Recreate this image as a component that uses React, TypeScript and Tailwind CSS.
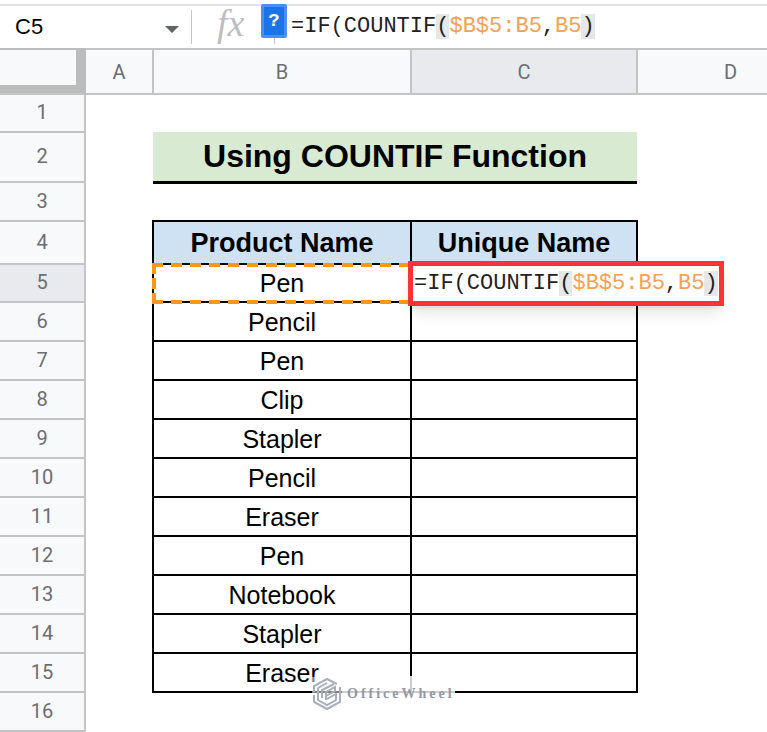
import { useState } from "react";
import type { ReactNode } from "react";

type RowType = {
  id: number;
  product?: string;
  height: string;
};

const rows: RowType[] = [
  { id: 5, product: "Pen", height: "h-[38px]" },
  { id: 6, product: "Pencil", height: "h-[39px]" },
  { id: 7, product: "Pen", height: "h-[39px]" },
  { id: 8, product: "Clip", height: "h-[39px]" },
  { id: 9, product: "Stapler", height: "h-[39px]" },
  { id: 10, product: "Pencil", height: "h-[39px]" },
  { id: 11, product: "Eraser", height: "h-[39px]" },
  { id: 12, product: "Pen", height: "h-[39px]" },
  { id: 13, product: "Notebook", height: "h-[39px]" },
  { id: 14, product: "Stapler", height: "h-[39px]" },
  { id: 15, product: "Eraser", height: "h-[39px]" },
];

const Formula = () => (
  <>
    =IF(COUNTIF<span className="bg-[#e6e8e8]">(</span>
    <span className="text-[#f9a150]">$B$5:B5</span>,
    <span className="text-[#f9a150]">B5</span>
    <span className="bg-[#e6e8e8]">)</span>
  </>
);

const ColumnHeader = ({ children, active }: { children: ReactNode; active?: boolean }) => (
  <th
    scope="col"
    className={`border-2 border-[#c4c4c4] p-0 font-[Roboto,sans-serif] text-[20px] leading-6 font-normal text-[#6b6e72] ${
      active ? "bg-[#e8eaed]" : "bg-[#f8f9fa]"
    }`}
  >
    {children}
  </th>
);

const RowHeader = ({ id, active }: { id: number; active?: boolean }) => (
  <th
    scope="row"
    className={`border-2 border-l-0 border-[#c4c4c4] pb-0.5 font-[Roboto,sans-serif] text-[20px] leading-6 font-normal text-[#6b6e72] ${
      active ? "bg-[#e8eaed]" : "bg-[#f8f9fa]"
    }`}
  >
    {id}
  </th>
);

const FormulaBar = () => {
  const [cell, setCell] = useState("C5");

  return (
    <div className="mt-1 flex h-11 items-center border-t-2 border-[#e1e2e5]">
      <input
        aria-label="Name box"
        value={cell}
        onChange={(e) => setCell(e.target.value)}
        className="h-8 w-[152px] pl-[15px] text-[22px] leading-8 text-black outline-none"
      />
      <button aria-label="Named ranges" className="flex h-8 w-[39px] items-center justify-center">
        <svg width="14" height="7" viewBox="0 0 14 7" className="mt-1">
          <path d="M0 0h14L7 7z" fill="#5f6368" />
        </svg>
      </button>
      <div className="h-[34px] w-px bg-[#c6c6c6]" />
      <span className="w-[69px] pb-2 pl-[25px] font-['Liberation_Serif',serif] text-[38px] leading-9 text-[#bdbdbd] italic">
        fx
      </span>
      <div className="flex h-full flex-col items-center">
        <button
          aria-label="Formula help"
          className="-mt-0.5 h-[34px] w-[26px] rounded-xs border-3 border-[#4d8df6] bg-[#1a73e8] font-['Liberation_Mono',monospace] text-[19px] leading-7 font-bold text-white"
        >
          ?
        </button>
        <div className="h-1.5 w-px bg-[#c6c6c6]" />
      </div>
      <div
        role="textbox"
        aria-label="Formula"
        contentEditable
        suppressContentEditableWarning
        className="ml-1 min-w-0 flex-1 font-['Liberation_Mono',monospace] text-[22px] leading-7 whitespace-nowrap text-[#222] outline-none"
      >
        <Formula />
      </div>
    </div>
  );
};

// Marching-ants outline of the range picked by the formula
const RangeOutline = () => (
  <svg
    className="absolute -top-0.5 -left-0.5 h-[41px] w-[260px]"
    viewBox="0 0 260 41"
    stroke="#f7981d"
    strokeWidth="4"
  >
    <path d="M0 2h260M0 39h260" strokeDasharray="11 8" />
    <path d="M2 0v41" strokeDasharray="11 4" />
  </svg>
);

const Watermark = () => (
  <div className="absolute top-[676px] left-[312px] flex items-center">
    <svg
      width="30"
      height="34"
      viewBox="0 0 30 34"
      fill="none"
      stroke="#a9aebb"
      strokeWidth="2"
      className="bg-white/50"
    >
      <path d="M2 15V9l13-7 10 5" />
      <path d="M28 10v15l-13 7-13-7v-7" />
      <path d="M6 11v12l9 5 9-5v-6l-9 5" />
      <path d="M10 21v-8l12-6M6 11l9-5" />
      <path d="M14 23v-8l9-5v4l-9 5" />
    </svg>
    <span className="bg-white/80 pl-[5px] font-['Liberation_Serif',serif] text-[14px] leading-9 font-bold tracking-[3px] text-[#9298aa]">
      OfficeWheel
    </span>
  </div>
);

export default function App() {
  return (
    <main className="relative min-h-screen overflow-hidden bg-white font-['Liberation_Sans',Arial,sans-serif] text-black">
      <FormulaBar />
      <table className="w-full table-fixed border-collapse text-center">
        <colgroup>
          <col className="w-[85px]" />
          <col className="w-[68px]" />
          <col className="w-[258px]" />
          <col className="w-[226px]" />
          <col />
        </colgroup>
        <thead>
          <tr className="h-[44px]">
            <td className="border-t-2 border-r-2 border-[#bcbcbc] bg-[#bcbcbc] p-0">
              <div className="mr-2 mb-2 h-[35px] bg-[#f8f9fa]" />
            </td>
            <ColumnHeader>A</ColumnHeader>
            <ColumnHeader>B</ColumnHeader>
            <ColumnHeader active>C</ColumnHeader>
            <th
              scope="col"
              className="border-y-2 border-[#c4c4c4] bg-[#f8f9fa] p-0 pl-[56px] font-[Roboto,sans-serif] text-[20px] leading-6 font-normal text-[#6b6e72]"
            >
              D
            </th>
          </tr>
        </thead>
        <tbody>
          <tr className="h-[38px]">
            <RowHeader id={1} />
          </tr>
          <tr className="h-[50px]">
            <RowHeader id={2} />
            <td />
            <td
              colSpan={2}
              className="border-b-3 border-black bg-[#d9ead3] p-0 text-[32px] leading-9 font-bold"
            >
              Using COUNTIF Function
            </td>
          </tr>
          <tr className="h-[39px]">
            <RowHeader id={3} />
          </tr>
          <tr className="h-[43px]">
            <RowHeader id={4} />
            <td />
            <td className="border-2 border-black bg-[#cfe2f3] p-0 text-[27px] leading-8 font-bold">
              Product Name
            </td>
            <td className="border-2 border-black bg-[#cfe2f3] p-0 text-[27px] leading-8 font-bold">
              Unique Name
            </td>
          </tr>
          {rows.map((row) => (
            <tr key={row.id} className={row.height}>
              <RowHeader id={row.id} active={row.id === 5} />
              <td />
              <td className="relative border-2 border-black p-0 text-[25px] leading-8">
                {row.product}
                {row.id === 5 && <RangeOutline />}
              </td>
              <td className="relative border-2 border-black p-0">
                {row.id === 5 && (
                  <div className="absolute -top-1 -left-1 z-10 flex h-[45px] items-center border-5 border-[#ff3333] bg-white px-px font-['Liberation_Mono',monospace] text-[22px] leading-7 whitespace-nowrap text-[#222] shadow-lg">
                    <span>
                      <Formula />
                    </span>
                  </div>
                )}
              </td>
            </tr>
          ))}
          <tr className="h-[39px]">
            <RowHeader id={16} />
          </tr>
        </tbody>
      </table>
      <Watermark />
    </main>
  );
}
